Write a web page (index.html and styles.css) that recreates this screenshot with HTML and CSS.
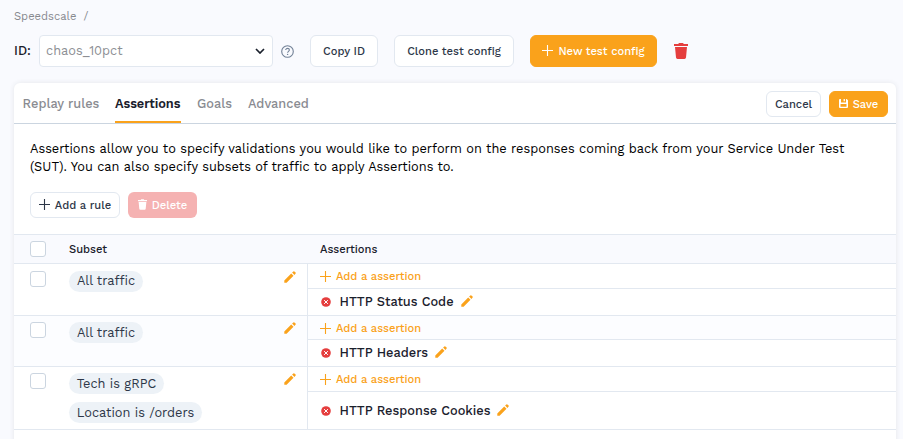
FILE: index.html
```html
<!DOCTYPE html>
<html lang="en">
<head>
<meta charset="utf-8">
<title>Speedscale test config</title>
<link rel="stylesheet" href="styles.css">
</head>
<body>
<svg class="sprite" aria-hidden="true">
  <symbol id="plus" viewBox="0 0 11 11"><path d="M5.500 0v11M0 5.500h11" fill="none" stroke="currentColor" stroke-width="1.100"/></symbol>
  <symbol id="trash" viewBox="0 0 14 16"><path d="M0 1h4.2l.8-1h4l.8 1H14v2H0zM1 4h12l-1 10.6Q11.8 16 10.500 16h-7Q2.200 16 2 14.600z" fill="currentColor"/></symbol>
  <symbol id="pencil" viewBox="0 0 12 12"><path d="M.3 9.400 7.200 2.500 9.500 4.800l-6.900 6.900H.3zM8.100 1.600 9.400.4q.5-.5 1 0l1.200 1.200q.5.500 0 1l-1.200 1.300z" fill="currentColor"/></symbol>
  <symbol id="remove" viewBox="0 0 10 10"><circle cx="5" cy="5" r="4.800" fill="#e53e3e"/><path d="m3.100 3.100 3.800 3.800m0-3.800L3.100 6.900" stroke="#fff" stroke-width="1"/></symbol>
</svg>
<nav class="crumbs"><span>Speedscale</span><span>/</span></nav>
<header class="toolbar">
  <span class="id-label">ID:</span>
  <div class="select"><span>chaos_10pct</span><svg class="chevron" viewBox="0 0 10 6"><path d="m1 1 4 4 4-4" fill="none" stroke="#1a202c" stroke-width="1.700"/></svg></div>
  <svg class="help" viewBox="0 0 13 13"><circle cx="6.500" cy="6.500" r="5.800" fill="none" stroke="#718096" stroke-width="1.100"/><path d="M4.700 5.100c0-2.300 3.700-2.200 3.700 0 0 1.200-1.800 1.300-1.800 2.600" fill="none" stroke="#718096" stroke-width="1.100"/><circle cx="6.600" cy="9.400" r=".7" fill="#718096"/></svg>
  <button class="btn copy">Copy ID</button>
  <button class="btn clone">Clone test config</button>
  <button class="btn primary new"><svg class="plus"><use href="#plus"/></svg>New test config</button>
  <svg class="trash-red"><use href="#trash"/></svg>
</header>
<main class="card">
  <div class="tabs">
    <a class="tab replay">Replay rules</a><a class="tab active">Assertions</a><a class="tab goals">Goals</a><a class="tab advanced">Advanced</a>
    <div class="actions">
      <button class="btn small cancel">Cancel</button>
      <button class="btn small primary save"><svg class="disk" viewBox="0 0 9 9"><path fill-rule="evenodd" d="M1 0h1v3.500h5V0h.7L9 1.300V8q0 1-1 1H1Q0 9 0 8V1q0-1 1-1zM1.500 5v2.800h6V5zM4.600 0h1.300v2.300H4.600z" fill="currentColor"/></svg>Save</button>
    </div>
  </div>
  <section class="intro">
    <p>Assertions allow you to specify validations you would like to perform on the responses coming back from your Service Under Test<br>(SUT). You can also specify subsets of traffic to apply Assertions to.</p>
    <div class="rule-actions">
      <button class="btn small add"><svg class="plus"><use href="#plus"/></svg>Add a rule</button>
      <button class="btn small delete"><svg class="trash-small"><use href="#trash"/></svg>Delete</button>
    </div>
  </section>
  <section class="table">
    <div class="row head"><i class="check"></i><b class="subset-title">Subset</b><b class="assert-title">Assertions</b></div>
    <div class="row first">
      <i class="check"></i>
      <div class="subset"><span class="pill all">All traffic</span></div>
      <svg class="pencil"><use href="#pencil"/></svg>
      <div class="rules"><div class="add-line"><svg class="plus"><use href="#plus"/></svg>Add a assertion</div><div class="rule"><svg class="remove"><use href="#remove"/></svg><span>HTTP Status Code</span><svg class="pencil"><use href="#pencil"/></svg></div></div>
    </div>
    <div class="row second-row">
      <i class="check"></i>
      <div class="subset"><span class="pill all">All traffic</span></div>
      <svg class="pencil"><use href="#pencil"/></svg>
      <div class="rules"><div class="add-line"><svg class="plus"><use href="#plus"/></svg>Add a assertion</div><div class="rule"><svg class="remove"><use href="#remove"/></svg><span>HTTP Headers</span><svg class="pencil"><use href="#pencil"/></svg></div></div>
    </div>
    <div class="row third">
      <i class="check"></i>
      <div class="subset"><span class="pill tech">Tech is gRPC</span><span class="pill location">Location is /orders</span></div>
      <svg class="pencil"><use href="#pencil"/></svg>
      <div class="rules"><div class="add-line"><svg class="plus"><use href="#plus"/></svg>Add a assertion</div><div class="rule"><svg class="remove"><use href="#remove"/></svg><span>HTTP Response Cookies</span><svg class="pencil"><use href="#pencil"/></svg></div></div>
    </div>
  </section>
</main>
</body>
</html>
```
FILE: styles.css
```css
* { box-sizing: border-box; }
body { margin: 0; height: 439px; overflow: hidden; background: #f9fafe; color: #1a202c; font: 12.8px/18px "Work Sans", Inter, sans-serif; white-space: nowrap; }
svg { flex: none; display: block; }
.sprite { position: absolute; width: 0; height: 0; }
.crumbs { display: flex; gap: 7px; padding: 8px 14px 0; height: 35px; font-size: 11.2px; color: #87898f; }
.toolbar { display: flex; align-items: center; height: 32px; padding-left: 14px; }
.id-label { width: 25px; font-weight: 500; }
.select { width: 234px; height: 32px; display: flex; align-items: center; justify-content: space-between; padding: 0 7px 0 6px; border: 1px solid #e2e8f0; border-radius: 4px; background: #fff; color: #8d8f94; }
.chevron { width: 10px; height: 6px; }
.help { width: 13px; height: 13px; margin-left: 8px; margin-right: 16px; }
.btn { display: flex; flex: none; align-items: center; justify-content: center; height: 32px; padding: 1px 0 0; border: 1px solid #e2e8f0; border-radius: 6px; background: #fff; color: #2d3748; font: 500 11.2px/16px "Work Sans", Inter, sans-serif; white-space: nowrap; }
.copy { width: 68px; margin-right: 16px; }
.clone { width: 120px; margin-right: 16px; }
.new { width: 127px; margin-right: 17px; }
.primary { background: #faa21b; border-color: #faa21b; color: #fff; }
.plus { width: 11px; height: 11px; margin-right: 5px; }
.btn .plus { margin-top: -2px; }
.trash-red { width: 14px; height: 16px; color: #e53e3e; }
.card { width: 882px; height: 370px; margin: 16px 0 0 14px; background: #fff; border-radius: 6px 6px 0 0; box-shadow: 0 0 5px rgba(45, 55, 72, .1); }
.tabs { display: flex; height: 41px; padding-left: 8.6px; border-bottom: 1px solid #cbd5e0; }
.tab { height: 40px; padding-top: 12px; margin-right: 16px; color: #898b91; font-weight: 500; }
.replay { width: 76.400px; }
.active { width: 66px; color: #1a202c; font-weight: 600; border-bottom: 2px solid #faa21b; letter-spacing: -.08px; }
.goals { width: 35px; }
.advanced { width: 61px; }
.actions { display: flex; margin: 8px 8px 0 auto; gap: 8px; }
.small { height: 26px; }
.cancel { width: 55px; }
.save { width: 59px; }
.disk { width: 9px; height: 9px; margin: -2px 5px 0 0; }
.intro { height: 110px; padding: 16px 16px 0; color: #000; }
.intro p { margin: 0; }
.rule-actions { display: flex; gap: 8px; margin-top: 16px; }
.add { width: 90px; }
.delete { width: 69px; border: 0; background: #f5b2b2; color: #fff; }
.trash-small { width: 9px; height: 11px; margin: -2px 5px 0 0; }
.table { border-top: 1px solid #e2e8f0; }
.row { display: flex; align-items: flex-start; border-bottom: 1px solid #e2e8f0; padding-left: 16px; }
.head { height: 29px; background: #f9fafe; font-size: 11.2px; align-items: center; }
.head b { font-weight: 500; padding-top: 1px; }
.subset-title { width: 251px; }
.check { flex: none; width: 16px; height: 16px; margin-right: 23px; border: 1px solid #cbd5e0; border-radius: 3px; background: #fff; }
.row:not(.head) .check { margin-top: 7px; }
.first { height: 52px; }
.second-row { height: 51px; background: #fcfdff; }
.third { height: 63px; }
.row.second-row .check, .row.third .check { margin-top: 6px; }
.subset { width: 214px; height: 100%; display: flex; flex-direction: column; align-items: flex-start; padding-top: 7px; }
.second-row .subset { padding-top: 6px; }
.third .subset { padding-top: 6px; gap: 8px; }
.pill { flex: none; height: 21px; border-radius: 11px; background: #edf2f7; color: #2d3748; text-align: center; line-height: 21px; }
.first .pill { line-height: 19px; }
.all { width: 74px; }
.tech { width: 95px; }
.location { width: 133px; }
.pencil { width: 12px; height: 12px; color: #faa21b; margin: 6.5px -.5px 0 .5px; }
.second-row > .pencil, .third > .pencil { margin-top: 5.5px; }
.rules { flex: 1; align-self: stretch; margin-left: 12px; border-left: 1px solid #e2e8f0; display: flex; flex-direction: column; }
.add-line { height: 25px; flex: none; display: flex; align-items: center; padding-left: 12px; border-bottom: 1px solid #e2e8f0; color: #faa21b; font-size: 11.2px; font-weight: 500; line-height: 17px; }
.second-row .add-line { height: 24px; padding-top: 1px; }
.rule { flex: 1; display: flex; align-items: center; padding-left: 12.5px; background: #fff; font-weight: 500; }
.rule span { margin: 0 7px 0 9px; }
.rule .pencil { margin: -2px 0 0; }
.remove { width: 10px; height: 10px; }
```
